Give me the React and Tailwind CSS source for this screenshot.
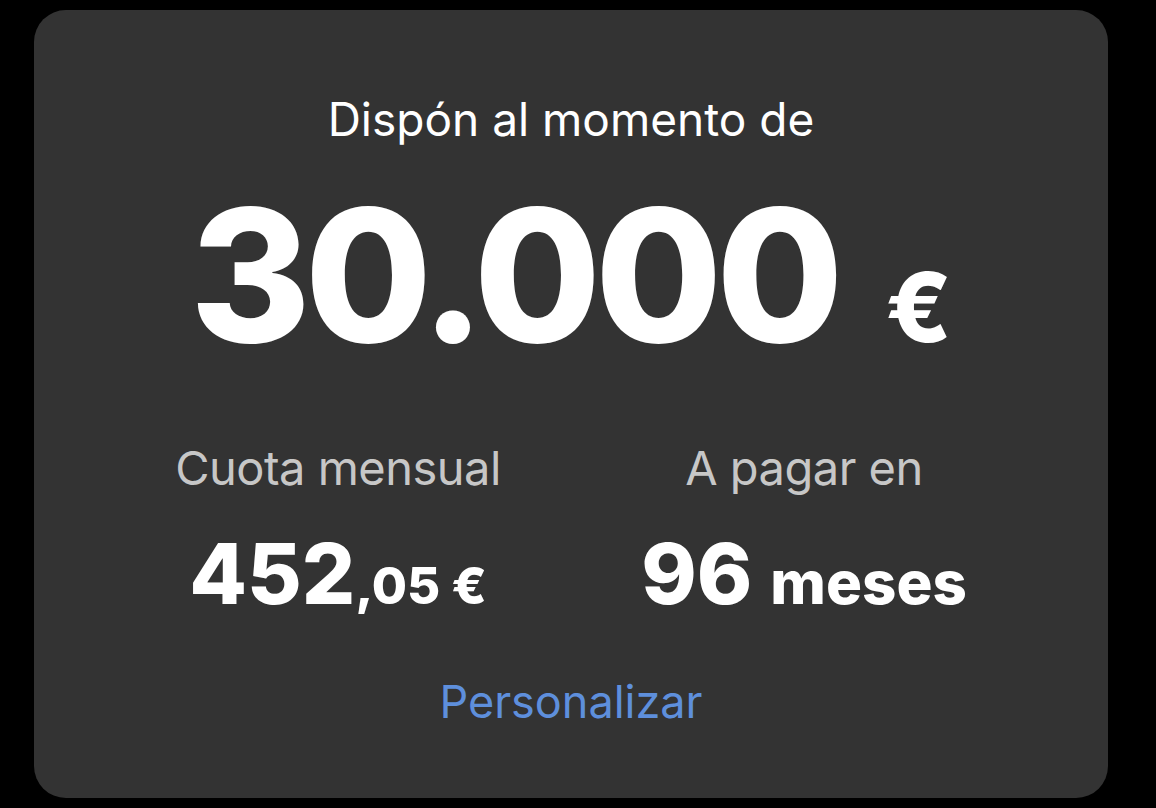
export default function App() {
  return (
    <div className="h-[808px] w-full bg-black pt-[10px] pl-[34px]" style={{ fontFamily: "Inter, 'Noto Sans', sans-serif" }}>
      <div className="flex h-[788px] w-[1074px] flex-col items-center rounded-[32px] bg-[#333333] px-[71px] pt-[86px]">
        <p className="text-[46px] leading-none text-white">Dispón al momento de</p>

        <div className="mt-[41px] flex items-baseline leading-none text-white">
          <span className="text-[184px] font-extrabold tracking-[-6px]">30.000</span>
          <span className="ml-[48px] text-[96px] font-extrabold">€</span>
        </div>

        <div className="mt-[77px] grid w-full grid-cols-2">
          <div className="flex flex-col items-center">
            <p className="text-[47px] leading-none tracking-[-0.5px] text-[#c7c7c7]">Cuota mensual</p>
            <p className="mt-[41px] flex items-baseline leading-none text-white">
              <span className="text-[84px] font-extrabold">452</span>
              <span className="text-[51px] font-extrabold">,05 €</span>
            </p>
          </div>
          <div className="flex flex-col items-center">
            <p className="text-[47px] leading-none tracking-[-0.5px] text-[#c7c7c7]">A pagar en</p>
            <p className="mt-[41px] flex items-baseline leading-none text-white">
              <span className="text-[84px] font-extrabold">96</span>
              <span className="ml-[18px] text-[60px] font-extrabold">meses</span>
            </p>
          </div>
        </div>

        <button className="mt-[63px] text-[45px] leading-none text-[#5e8fdc]">Personalizar</button>
      </div>
    </div>
  )
}
